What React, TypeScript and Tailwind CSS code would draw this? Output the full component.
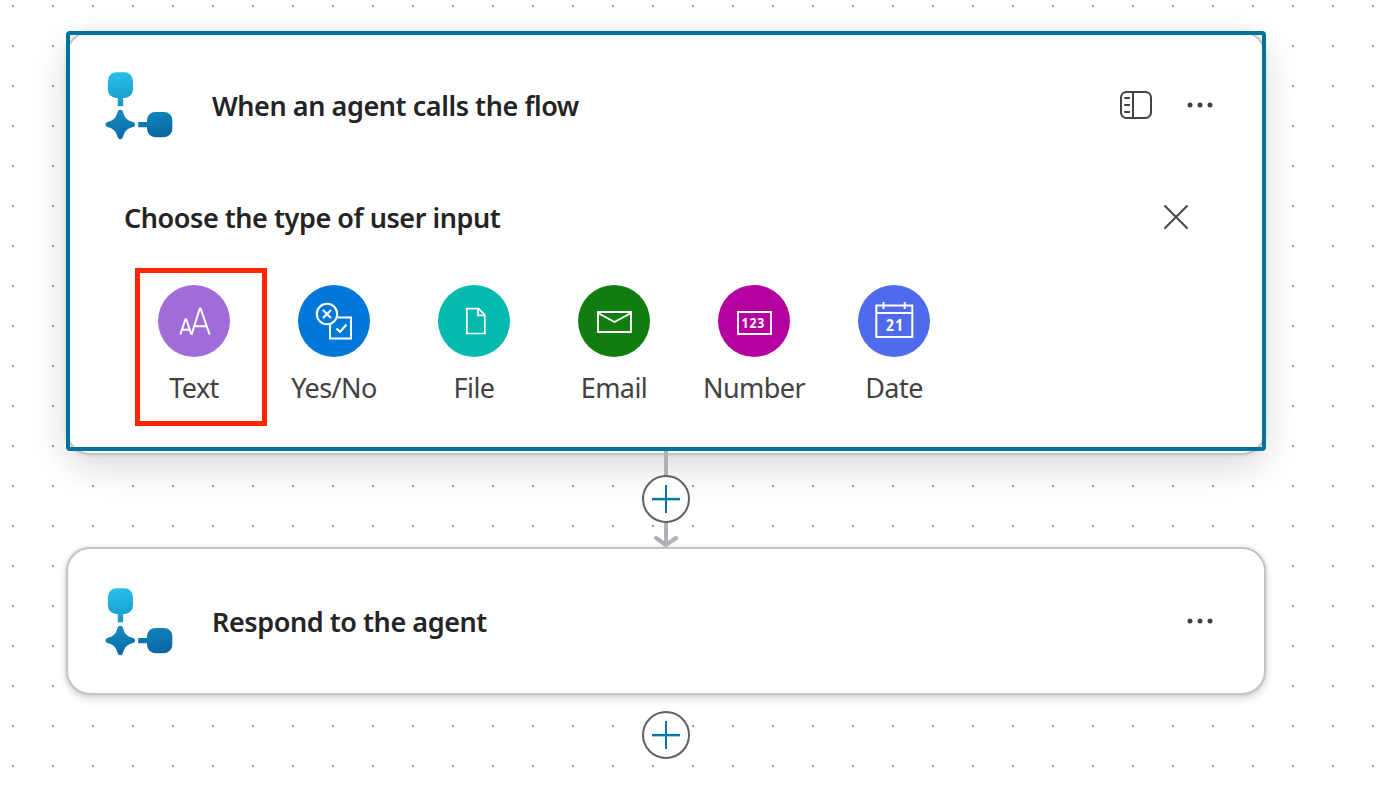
import type { ReactNode } from "react";

function FlowLogo({ id }: { id: string }) {
  return (
    <svg className="size-[72px] shrink-0" viewBox="103.6 68.5 73 73" aria-hidden="true">
      <defs>
        <linearGradient id={`${id}-top`} gradientUnits="userSpaceOnUse" x1="118" y1="72" x2="123" y2="106">
          <stop offset="0" stopColor="#28c0ea" />
          <stop offset="1" stopColor="#1798c8" />
        </linearGradient>
        <linearGradient id={`${id}-bottom`} gradientUnits="userSpaceOnUse" x1="136" y1="110" x2="140" y2="139">
          <stop offset="0" stopColor="#1289c0" />
          <stop offset="1" stopColor="#0a67a3" />
        </linearGradient>
      </defs>
      <path
        fill={`url(#${id}-top)`}
        d="M116 71.800h8.500a8.500 8.500 0 0 1 8.500 8.500v9a8.500 8.500 0 0 1-8.500 8.500h-1.500v8.500h-5.500v-8.500h-1.500a8.500 8.500 0 0 1-8.500-8.500v-9a8.500 8.500 0 0 1 8.500-8.500z"
      />
      <path
        fill={`url(#${id}-bottom)`}
        d="M120.100 109.700c1.700 0 2.600 1.300 3 2.900 1.200 4.900 3.600 7.800 8.600 9.100 1.800.5 3.400 1.200 3.400 3s-1.600 2.500-3.400 3c-5 1.300-7.400 4.200-8.600 9.100-.4 1.600-1.300 2.900-3 2.900s-2.600-1.300-3-2.900c-1.200-4.900-3.600-7.800-8.600-9.100-1.800-.5-3.400-1.200-3.400-3s1.600-2.500 3.400-3c5-1.300 7.400-4.200 8.600-9.100.4-1.600 1.300-2.900 3-2.900z"
      />
      <path
        fill={`url(#${id}-bottom)`}
        d="M138.300 122.200h8.900v-1.700a8.500 8.500 0 0 1 8.500-8.500h8.700a8.500 8.500 0 0 1 8.500 8.500v8.600a8.500 8.500 0 0 1-8.500 8.500h-8.700a8.500 8.500 0 0 1-8.500-8.500v-1.500h-8.900z"
      />
    </svg>
  );
}

function PanelIcon() {
  return (
    <svg className="size-8" viewBox="0 0 32 32" fill="none" stroke="#424242" strokeWidth="2">
      <rect x="1" y="3" width="30" height="26" rx="5.500" />
      <path d="M13 3v26" />
      <path d="M5 9h4.200M5 16h4.200M5 23h4.200" strokeLinecap="round" />
    </svg>
  );
}

function MoreIcon() {
  return (
    <svg className="size-8" viewBox="0 0 32 32" fill="#424242">
      <circle cx="6" cy="16" r="2.500" />
      <circle cx="16" cy="16" r="2.500" />
      <circle cx="26" cy="16" r="2.500" />
    </svg>
  );
}

function CloseIcon() {
  return (
    <svg className="size-8" viewBox="0 0 32 32" stroke="#424242" strokeWidth="1.900" strokeLinecap="round">
      <path d="M5 5l22 22M27 5L5 27" />
    </svg>
  );
}

function CardHeader({ id, title, children }: { id: string; title: string; children: ReactNode }) {
  return (
    <header className="flex h-36 items-center gap-9 pr-12 pl-9">
      <FlowLogo id={id} />
      <h2 className="flex-1 pt-0.5 text-[27px] leading-9 font-semibold tracking-[-0.43px] whitespace-nowrap text-[#242424]">{title}</h2>
      <div className="flex items-center gap-8">{children}</div>
    </header>
  );
}

const inputTypes: { label: string; color: string; icon: ReactNode }[] = [
  {
    label: "Text",
    color: "bg-[#a06cd9]",
    icon: (
      <g strokeWidth="2" strokeLinejoin="bevel">
        <path d="M22.300 49.500l5.100-15.300h.8l5.200 15.300M24.200 44.800h7.400" />
        <path d="M33.600 49.500l8.200-26h.8l9 26M36.900 41.300h12" />
      </g>
    ),
  },
  {
    label: "Yes/No",
    color: "bg-[#0078da]",
    icon: (
      <g strokeWidth="2">
        <circle cx="29" cy="29" r="10.200" />
        <path d="M25 25l8 8M33 25l-8 8" strokeWidth="2.200" />
        <path d="M39.500 32.500H53v21H32V39.500" />
        <path d="M38.500 43.500l3.500 3.500 6.500-7.500" strokeWidth="2.200" />
      </g>
    ),
  },
  {
    label: "File",
    color: "bg-[#04b9ae]",
    icon: (
      <g strokeWidth="1.700">
        <path d="M28.800 23.600h11.700l6.300 6.300v18.600h-18z" />
        <path d="M40 23.600v6.700h6.800" />
      </g>
    ),
  },
  {
    label: "Email",
    color: "bg-[#117c10]",
    icon: (
      <g strokeWidth="1.900">
        <path d="M20 27h33v20H20z" />
        <path d="M20 28l16.500 9L53 28" />
      </g>
    ),
  },
  {
    label: "Number",
    color: "bg-[#b4009e]",
    icon: (
      <g>
        <path strokeWidth="1.900" d="M20 27h33v22H20z" />
        <g transform="translate(34.900 43.100) scale(0.82 1)">
          <text textAnchor="middle" fontSize="15" fontWeight="700" fill="#fff" stroke="none" textLength="28">
            123
          </text>
        </g>
      </g>
    ),
  },
  {
    label: "Date",
    color: "bg-[#4f6bed]",
    icon: (
      <g strokeWidth="2">
        <path d="M18.300 20.500h36v31.500h-36zM18.300 28h36M25.500 17v7M46.700 17v7" />
        <g transform="translate(36.700 45.700) scale(0.84 1)">
          <text textAnchor="middle" fontSize="16.500" fontWeight="700" fill="#fff" stroke="none" textLength="20.500">
            21
          </text>
        </g>
      </g>
    ),
  },
];

function AddCircle() {
  return (
    <g fill="none">
      <circle cx="24" cy="24" r="23" fill="#fff" stroke="#616161" strokeWidth="2" />
      <path d="M24 10v28" stroke="#0078ab" strokeWidth="2" />
      <path d="M10 24.100h28" stroke="#0078ab" strokeWidth="2.500" />
    </g>
  );
}

export default function App() {
  return (
    <main className="h-[786px] w-[1392px] overflow-hidden bg-white pt-[31px] pl-[66px] font-['Noto_Sans','Open_Sans',sans-serif]">
      <div className="relative w-[1200px]">
        <svg className="absolute -top-[31px] -left-[66px] h-[786px] w-[1392px]" aria-hidden="true">
          <defs>
            <pattern id="canvas-dots" width="40" height="40" patternUnits="userSpaceOnUse">
              <rect x="12" y="5" width="2" height="2" fill="#999" />
            </pattern>
          </defs>
          <rect width="1392" height="786" fill="url(#canvas-dots)" />
        </svg>

        <div className="relative flex flex-col items-center">
          <section className="relative h-[424px] w-full rounded-3xl border-2 border-[#c4c4c4] bg-white shadow-[0_0_4px_rgba(0,0,0,0.12),0_12px_36px_rgba(0,0,0,0.15)]">
            <CardHeader id="trigger" title="When an agent calls the flow">
              <PanelIcon />
              <MoreIcon />
            </CardHeader>
            <div className="mt-[22px] flex h-9 items-center justify-between pr-[72px] pl-14">
              <h3 className="pt-0.5 text-[27px] leading-9 font-semibold tracking-[-0.44px] text-[#242424]">Choose the type of user input</h3>
              <CloseIcon />
            </div>
            <ul className="mt-[50px] flex pl-14">
              {inputTypes.map((type) => (
                <li key={type.label} className="relative flex w-[140px] flex-col items-center gap-[13px]">
                  <div className={`size-[72px] rounded-full ${type.color}`}>
                    <svg className="size-[72px]" viewBox="0 0 72 72" fill="none" stroke="#fff">
                      {type.icon}
                    </svg>
                  </div>
                  <span className="text-[27px] leading-9 tracking-[-0.55px] text-[#424242]">{type.label}</span>
                  {type.label === "Text" && (
                    <div className="absolute -top-[17px] left-[11px] h-[158px] w-[132px] border-5 border-[#ff2600]" />
                  )}
                </li>
              ))}
            </ul>
            <div className="pointer-events-none absolute -top-0.5 -right-0.5 -left-0.5 h-[420px] rounded border-4 border-[#00739d]" />
          </section>

          <svg className="relative -mt-1 h-24 w-12" viewBox="0 0 48 96" fill="none">
            <path d="M24 0v94" stroke="#b1b0b6" strokeWidth="4" />
            <path d="M14 87l10 7 10-7" stroke="#b1b0b6" strokeWidth="4" strokeLinecap="round" />
            <g transform="translate(0 24)">
              <AddCircle />
            </g>
          </svg>

          <section className="w-full rounded-3xl border-2 border-[#c4c4c4] bg-white shadow-[0_0_4px_rgba(0,0,0,0.12),0_4px_8px_rgba(0,0,0,0.14)]">
            <CardHeader id="response" title="Respond to the agent">
              <MoreIcon />
            </CardHeader>
          </section>

          <svg className="mt-4 size-12" viewBox="0 0 48 48">
            <AddCircle />
          </svg>
        </div>
      </div>
    </main>
  );
}
